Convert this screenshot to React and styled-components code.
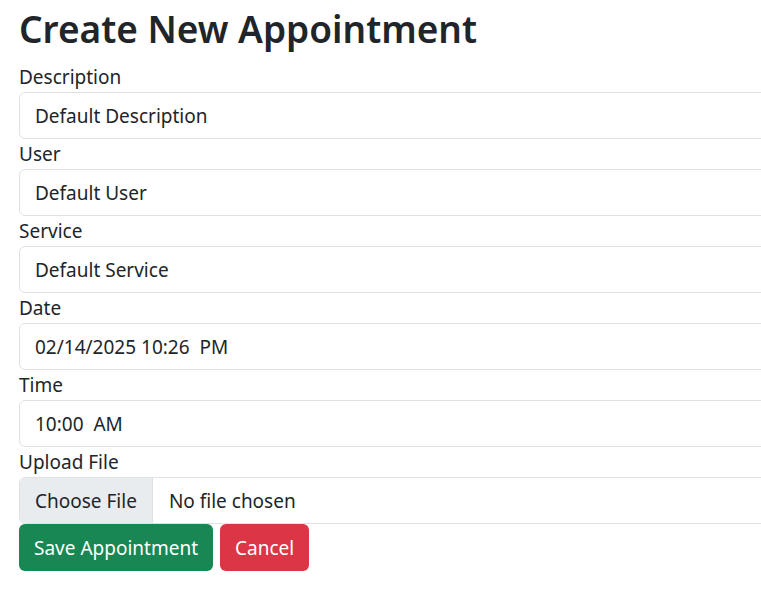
import React from "react";
import styled, { createGlobalStyle } from "styled-components";

const Global = createGlobalStyle`
  html, body { margin: 0; padding: 0; overflow: hidden; background: #fff; }
  body { font-family: "Noto Sans", "Open Sans", sans-serif; color: #212529; }
  * { box-sizing: border-box; }
`;

const Page = styled.div`
  width: 1000px;
  padding: 5px 0 0 19px;
`;

const Title = styled.h1`
  margin: 0 0 9px;
  font-size: 37px;
  line-height: 48px;
  font-weight: 600;
  color: #212529;
`;

const Form = styled.form`
  display: flex;
  flex-direction: column;
`;

const Label = styled.label`
  display: block;
  font-size: 19px;
  line-height: 30px;
  color: #212529;
`;

const Input = styled.input`
  display: block;
  width: 100%;
  height: 47px;
  padding: 1px 15px 0;
  font-family: inherit;
  font-size: 19px;
  color: #212529;
  background: #fff;
  border: 1px solid #dee2e6;
  border-radius: 6px;
  outline: none;
`;

const FileBox = styled.div`
  display: flex;
  align-items: stretch;
  height: 47px;
  border: 1px solid #dee2e6;
  border-radius: 6px;
  overflow: hidden;
  font-size: 19px;
`;

const FileButton = styled.span`
  display: flex;
  align-items: center;
  padding: 1px 15px 0;
  background: #e9ecef;
  border-right: 1px solid #dee2e6;
`;

const FileName = styled.span`
  display: flex;
  align-items: center;
  padding: 1px 16px 0;
`;

const Actions = styled.div`
  display: flex;
  gap: 7px;
`;

const Button = styled.button`
  height: 47px;
  padding: 1px 15px 0;
  font-family: inherit;
  font-size: 19px;
  color: #fff;
  border: none;
  border-radius: 6px;
  background: ${(p) => (p.$variant === "danger" ? "#dc3545" : "#198754")};
`;

const fields = [
  { label: "Description", value: "Default Description" },
  { label: "User", value: "Default User" },
  { label: "Service", value: "Default Service" },
  { label: "Date", value: "02/14/2025 10:26  PM" },
  { label: "Time", value: "10:00  AM" },
];

export default function App() {
  return (
    <>
      <Global />
      <Page>
        <Title>Create New Appointment</Title>
        <Form onSubmit={(e) => e.preventDefault()}>
          {fields.map((f) => (
            <div key={f.label}>
              <Label>{f.label}</Label>
              <Input type="text" defaultValue={f.value} />
            </div>
          ))}
          <div>
            <Label>Upload File</Label>
            <FileBox>
              <FileButton>Choose File</FileButton>
              <FileName>No file chosen</FileName>
            </FileBox>
          </div>
          <Actions>
            <Button type="button">Save Appointment</Button>
            <Button type="button" $variant="danger">Cancel</Button>
          </Actions>
        </Form>
      </Page>
    </>
  );
}
